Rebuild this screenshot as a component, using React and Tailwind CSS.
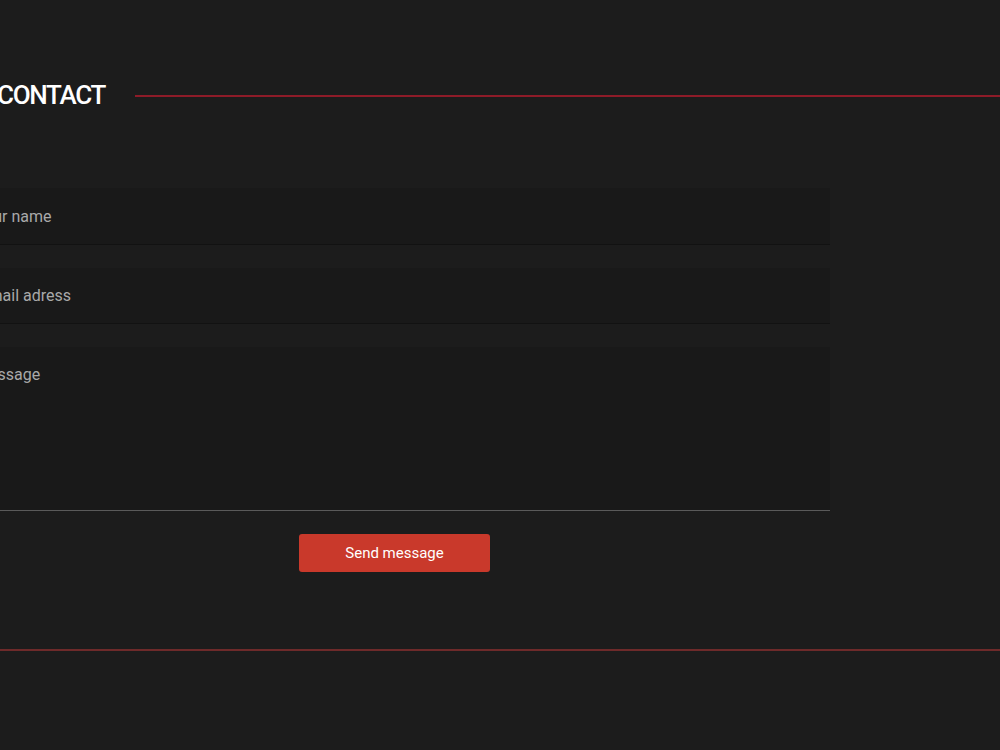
export default function App() {
  const font = { fontFamily: '"Roboto", "Noto Sans", sans-serif' };
  return (
    <div className="w-full h-[750px] bg-[#1c1c1c] overflow-hidden" style={font}>
      <div className="-ml-[41px] w-[1041px] pt-[76px]">
        <div className="flex items-center pl-[38px] h-[38px]">
          <h2 className="text-[26px] leading-[38px] font-medium text-white tracking-[-1.3px]">CONTACT</h2>
          <div className="flex-1 h-[2px] bg-[#8e1b28] ml-[30px] mt-[2px]"></div>
        </div>
        <form className="w-[871px] mt-[74px] flex flex-col gap-[23px]">
          <input
            type="text"
            placeholder="Your name"
            className="h-[57px] bg-[#191919] border-b border-[#121212] px-4 text-[16px] text-[#ccc] placeholder:text-[#a9a9a9] outline-none"
          />
          <input
            type="text"
            placeholder="E-mail adress"
            className="h-[56px] bg-[#191919] border-b border-[#121212] px-4 text-[16px] text-[#ccc] placeholder:text-[#a9a9a9] outline-none"
          />
          <textarea
            placeholder="Message"
            className="h-[164px] bg-[#191919] border-b border-[#5a5a5a] px-4 pt-[18px] text-[16px] leading-[20px] text-[#ccc] placeholder:text-[#a9a9a9] outline-none resize-none"
          ></textarea>
          <div className="flex justify-center">
            <button
              type="button"
              className="w-[191px] h-[38px] rounded-[3px] bg-[#c9392b] text-white text-[15px]"
            >
              Send message
            </button>
          </div>
        </form>
        <div className="mt-[77px] h-[2px] bg-[#6e2a2a] w-[1041px]"></div>
      </div>
    </div>
  );
}
